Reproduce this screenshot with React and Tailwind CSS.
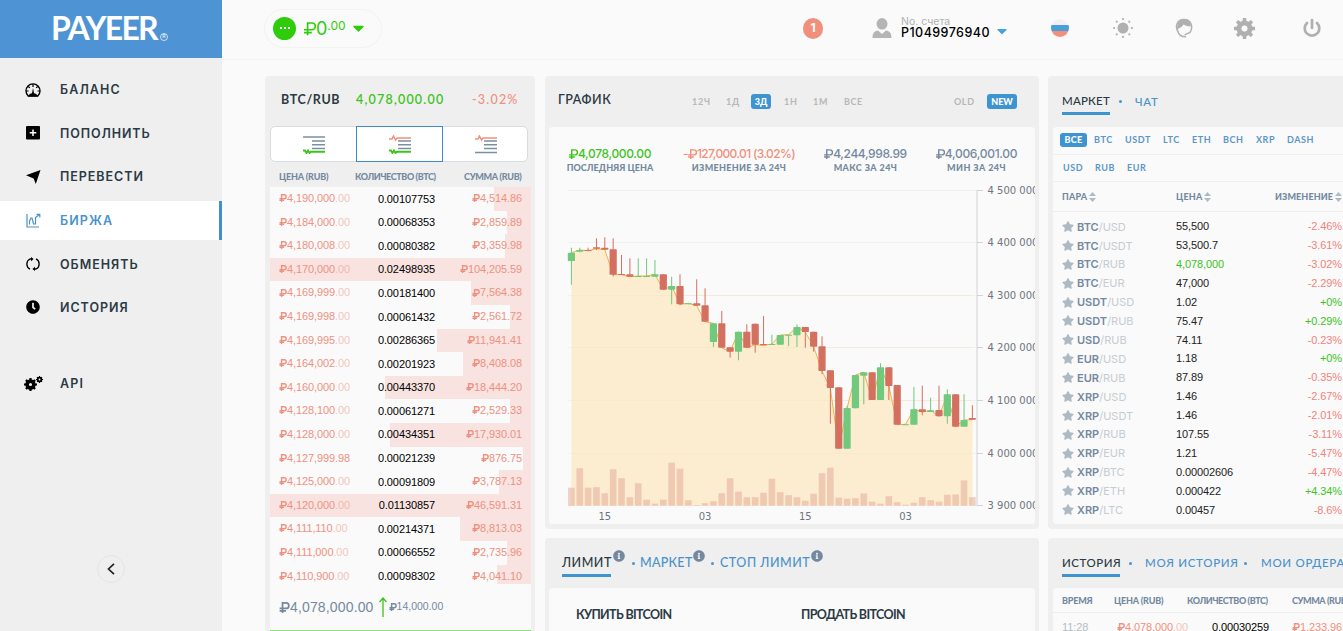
import React from 'react';
import { FaCaretDown, FaInfoCircle, FaStar, FaClock } from 'react-icons/fa';

const orders = [
  ['4,190,000', '.00', '0.00107753', '4,514.86', 37],
  ['4,184,000', '.00', '0.00068353', '2,859.89', 24],
  ['4,180,008', '.00', '0.00080382', '3,359.98', 26],
  ['4,170,000', '.00', '0.02498935', '104,205.59', 261],
  ['4,169,999', '.00', '0.00181400', '7,564.38', 60],
  ['4,169,998', '.00', '0.00061432', '2,561.72', 21],
  ['4,169,995', '.00', '0.00286365', '11,941.41', 94],
  ['4,164,002', '.00', '0.00201923', '8,408.08', 68],
  ['4,160,000', '.00', '0.00443370', '18,444.20', 146],
  ['4,128,100', '.00', '0.00061271', '2,529.33', 21],
  ['4,128,000', '.00', '0.00434351', '17,930.01', 141],
  ['4,127,999.98', '', '0.00021239', '876.75', 8],
  ['4,125,000', '.00', '0.00091809', '3,787.13', 32],
  ['4,120,000', '.00', '0.01130857', '46,591.31', 261],
  ['4,111,110', '.00', '0.00214371', '8,813.03', 71],
  ['4,111,000', '.00', '0.00066552', '2,735.96', 24],
  ['4,110,900', '.00', '0.00098302', '4,041.10', 34],
];

const pairs = [
  ['BTC', 'USD', '55,500', '-2.46%'],
  ['BTC', 'USDT', '53,500.7', '-3.61%'],
  ['BTC', 'RUB', '4,078,000', '-3.02%'],
  ['BTC', 'EUR', '47,000', '-2.29%'],
  ['USDT', 'USD', '1.02', '+0%'],
  ['USDT', 'RUB', '75.47', '+0.29%'],
  ['USD', 'RUB', '74.11', '-0.23%'],
  ['EUR', 'USD', '1.18', '+0%'],
  ['EUR', 'RUB', '87.89', '-0.35%'],
  ['XRP', 'USD', '1.46', '-2.67%'],
  ['XRP', 'USDT', '1.46', '-2.01%'],
  ['XRP', 'RUB', '107.55', '-3.11%'],
  ['XRP', 'EUR', '1.21', '-5.47%'],
  ['XRP', 'BTC', '0.00002606', '-4.47%'],
  ['XRP', 'ETH', '0.000422', '+4.34%'],
  ['XRP', 'LTC', '0.00457', '-8.6%'],
];

// up, body top, body bottom, high, low, volume height
const candles = [
  [1, 72.7, 81, 67.7, 104.7, 18], [1, 70, 71.7, 67.7, 72.3, 37.5], [0, 70, 70.7, 67.7, 70.7, 18], [0, 67.3, 68.7, 58.3, 70, 18.5],
  [0, 67.7, 69.7, 57.3, 70, 12.5], [0, 69.3, 94.7, 58.3, 96.5, 36.5], [0, 94, 94.7, 75, 94.7, 27.5], [0, 94.3, 96.7, 78.3, 96.7, 8.5],
  [1, 96, 96.7, 78.3, 96.7, 22.5], [1, 96, 96.7, 78.3, 96.7, 6], [1, 94.3, 96.7, 80, 96.7, 2], [0, 94.3, 109.7, 94.3, 109.7, 6],
  [1, 106, 109.7, 96.7, 124.3, 43], [0, 106, 124.3, 94.3, 125.3, 37], [1, 123.3, 124.3, 123.3, 124.3, 5.5], [0, 123.3, 125.7, 99.3, 125.7, 0.7],
  [0, 125.3, 141.7, 108.3, 141.7, 2.5], [1, 143.3, 162, 143.3, 167, 4.5], [0, 143.3, 167.7, 131, 167.7, 12.5], [0, 167.3, 171.7, 167.3, 177.7, 27.5],
  [1, 151.7, 171.7, 151.7, 180.3, 14], [0, 151.7, 167.7, 144.3, 167.7, 8.5], [0, 143.7, 164.7, 143.7, 172.7, 8.5], [0, 164, 165.3, 136, 165.3, 13],
  [1, 164, 164.7, 154.7, 164.7, 27], [1, 155, 164.7, 155, 164.7, 13.5], [1, 154.7, 155.3, 154.7, 166, 10.5], [1, 147, 155.3, 144.3, 167, 8.5],
  [0, 147, 152, 147, 167.7, 5], [0, 151.7, 166.7, 151.7, 171.7, 12], [0, 166.3, 191, 156.3, 194, 32.5], [0, 190.3, 208, 190.3, 243.7, 38],
  [0, 207.3, 268.7, 207.3, 268.7, 8], [1, 228, 268.7, 226.3, 268.7, 7], [1, 195, 228.3, 195, 228.3, 7.5], [1, 192.3, 195.7, 192.3, 224.3, 12.3],
  [0, 192.3, 220, 192.3, 220, 4], [1, 187.3, 220, 183.3, 220, 2], [0, 187.3, 206, 187.3, 220, 9.5], [0, 205, 244.7, 205, 244.7, 3.5],
  [1, 244.3, 245, 244.3, 245, 1], [1, 229.3, 244.7, 207, 244.7, 3], [0, 229.3, 232, 205.7, 235.3, 8.5], [1, 230.3, 232, 217.7, 232, 5.5],
  [0, 230, 236.3, 205.7, 236.3, 4], [1, 214.3, 236.3, 209.3, 243.7, 11], [0, 214.3, 246.7, 214.3, 246.7, 11.3], [1, 240, 246.7, 214.3, 246.7, 25.3],
  [0, 238, 239.7, 225.3, 239.7, 8.5],
];

const candleX = (i) => 22.4 + i * 8.354;

const Ruble = ({ className = '', stroke = 1.6 }) => (
  <svg viewBox="0 0 8 9" className={`inline-block ${className}`} fill="none" stroke="currentColor" strokeWidth={stroke}>
    <path d="M2.4 9V.8h2.900a2.200 2.200 0 0 1 0 4.500H0M0 7.200h5.200" />
  </svg>
);

const Gear = ({ className, fill, hole }) => (
  <svg viewBox="0 0 20 20" className={className} fill={fill}>
    <circle cx="10" cy="10" r="5.200" fill="none" stroke={fill} strokeWidth={hole} />
    {[0, 45, 90, 135, 180, 225, 270, 315].map((deg) => (
      <path key={deg} d="M8 4.500 8.400 0h3.200L12 4.500Z" transform={`rotate(${deg} 10 10)`} />
    ))}
  </svg>
);

const GaugeIcon = () => (
  <svg viewBox="0 0 16 14" className="h-3.5 w-4">
    <path d="M3.2 13A7 7 0 1 1 12.8 13Z" fill="none" stroke="#000" strokeWidth="1.4" strokeLinejoin="round" />
    <path d="M8 1v3M1 8h2.5M15 8h-2.5M3.3 3.5l1.5 1.4M12.7 3.5l-1.5 1.4" stroke="#000" strokeWidth="1.2" />
    <path d="M3 13.5c.4-2 2.300-3 4-3.200L8 5l1 5.300c1.700.2 3.600 1.200 4 3.200Z" />
  </svg>
);

const PlusIcon = () => (
  <svg viewBox="0 0 14 14" className="h-3.5 w-3.5">
    <rect width="14" height="13.500" rx="1" />
    <path d="M7 3.500v6.500M3.700 6.800h6.600" stroke="#fff" strokeWidth="1.500" />
  </svg>
);

const SendIcon = () => (
  <svg viewBox="0 0 15 14" className="h-3.5 w-[15px]">
    <path d="M14.500 0 9.800 14 7.600 8.400 0 5.300Z" />
  </svg>
);

const GraphIcon = () => (
  <svg viewBox="0 0 15 15" className="h-[15px] w-[15px]" fill="none" stroke="#4a92cb" strokeWidth="1.200">
    <path d="M1 1v13h12M3.500 11.500V8L5 5h1l1.500 6h2V4.500l4-3M10.500 1.300h3.300V4.500" />
  </svg>
);

const SwapIcon = () => (
  <svg viewBox="0 0 16 14" className="h-3.5 w-4" fill="none" stroke="#000" strokeWidth="1.300">
    <path d="M5 12.200A5.700 5.700 0 0 1 5 2H6.500M11 1.800A5.700 5.700 0 0 1 11 12H9.500" />
    <path d="M6 0l2.600 2L6 4.200ZM10 9.800 7.400 12 10 14Z" fill="#000" stroke="none" />
  </svg>
);

const ApiIcon = () => (
  <span className="flex items-start">
    <Gear className="mt-0.5 h-[13px] w-[13px]" fill="#000" hole={5.5} />
    <Gear className="-ml-px h-[7px] w-[7px]" fill="#000" hole={5} />
  </span>
);

const menu = [
  { label: 'БАЛАНС', icon: <GaugeIcon />, track: 'tracking-[1.1px]' },
  { label: 'ПОПОЛНИТЬ', icon: <PlusIcon />, track: 'tracking-[0.9px]' },
  { label: 'ПЕРЕВЕСТИ', icon: <SendIcon />, track: 'tracking-[0.95px]' },
  { label: 'БИРЖА', icon: <GraphIcon />, active: true, track: 'tracking-[1.1px]' },
  { label: 'ОБМЕНЯТЬ', icon: <SwapIcon />, track: 'tracking-[1px]' },
  { label: 'ИСТОРИЯ', icon: <FaClock className="h-3.5 w-3.5 text-black" />, track: 'tracking-[0.95px]' },
];

const MenuItem = ({ item }) => (
  <div
    className={`flex h-[39px] items-center ${
      item.active ? 'border-r-[3px] border-[#4090cf] bg-white text-[#4a92cb]' : 'text-[#2b3a44]'
    }`}
  >
    <span className="ml-[23px] flex w-5 justify-center">{item.icon}</span>
    <span className={`ml-[17px] pt-0.5 text-[12.5px] font-semibold ${item.track}`}>{item.label}</span>
  </div>
);

const Sidebar = () => (
  <aside className="flex w-[222px] shrink-0 flex-col bg-[#efefef] font-['Inter',sans-serif]">
    <div className="flex h-[58px] items-center justify-center bg-[#4e94d4] text-white">
      <span className="mb-0.5 ml-[-3px] font-['Lato',sans-serif] text-[32px] font-bold tracking-[-1.7px]">PAYEER</span>
      <span className="ml-[3px] mt-4 flex h-2 w-2 items-center justify-center rounded-full border border-white/70 text-[5px]">R</span>
    </div>
    <nav className="mt-3 flex flex-col gap-[4.6px]">
      {menu.map((item) => (
        <MenuItem key={item.label} item={item} />
      ))}
    </nav>
    <div className="mt-[37px]">
      <MenuItem item={{ label: 'API', icon: <ApiIcon />, track: 'tracking-[1.2px]' }} />
    </div>
    <button className="ml-[97px] mt-[152px] flex h-7 w-7 items-center justify-center rounded-full border border-[#e4e4e4]">
      <svg viewBox="0 0 8 12" className="h-3 w-2" fill="none" stroke="#222" strokeWidth="1.700">
        <path d="M7 .8 1.500 6 7 11.200" />
      </svg>
    </button>
  </aside>
);

const Header = () => (
  <header className="flex h-[60px] shrink-0 items-center border-b border-[#f4f4f4] pb-[3px] font-['Inter',sans-serif] text-[#b0b0b0]">
    <div className="ml-[42px] flex h-[39px] w-[118px] items-center rounded-full border border-[#f1f3ef] text-[#2ecc0a]">
      <span className="ml-2 flex h-[23px] w-[23px] items-center justify-center gap-0.5 rounded-full bg-[#2ecc0a]">
        <i className="h-0.5 w-0.5 bg-white" />
        <i className="h-0.5 w-0.5 bg-white" />
        <i className="h-0.5 w-0.5 bg-white" />
      </span>
      <Ruble className="ml-2 h-[15px] w-[12px]" stroke={1.1} />
      <span className="mt-0.5 text-[18px] leading-none">0</span>
      <span className="mb-1 text-[12px]">.00</span>
      <FaCaretDown className="ml-1.5 h-[18px] w-[13px]" />
    </div>
    <span className="ml-[421px] flex h-[21px] w-[20px] items-center justify-center rounded-full bg-[#f0907c] text-[12px] font-bold text-white">
      1
    </span>
    <svg viewBox="0 0 20 20" className="ml-[49px] h-5 w-5" fill="#b5b5b5">
      <ellipse cx="10" cy="5.800" rx="5.500" ry="5.800" />
      <path d="M.5 20c0-5 2-7 5.500-7.500l4 3.500 4-3.500c3.500.5 5.500 2.500 5.500 7.500Z" />
    </svg>
    <div className="ml-[9px] w-[92px]">
      <div className="text-[10.5px] leading-[10px]">No. счета</div>
      <div className="text-[12.5px] font-medium leading-[12px] tracking-[0.45px] text-black">P1049976940</div>
    </div>
    <FaCaretDown className="ml-[3px] mt-1.5 h-4 w-3 text-[#45a0dc]" />
    <svg viewBox="0 0 18 18" className="ml-[43px] h-[18px] w-[18px]">
      <clipPath id="flag">
        <circle cx="9" cy="9" r="9" />
      </clipPath>
      <g clipPath="url(#flag)">
        <path d="M0 0h18v6H0z" fill="#f3eff2" />
        <path d="M0 6h18v6H0z" fill="#4b9fd8" />
        <path d="M0 12h18v6H0z" fill="#f0907c" />
      </g>
    </svg>
    <svg viewBox="0 0 20 20" className="ml-[44px] h-5 w-5" fill="#b0b0b0">
      <circle cx="10" cy="10" r="5.500" />
      {[0, 45, 90, 135, 180, 225, 270, 315].map((deg) => (
        <circle key={deg} cx="10" cy="1.100" r="1.100" transform={`rotate(${deg} 10 10)`} />
      ))}
    </svg>
    <svg viewBox="0 0 18 20" className="ml-[42px] h-5 w-[18px]" fill="none" stroke="#b0b0b0" strokeWidth="1.400">
      <path d="M3.500 14.500C-.5 9 1.500 1.500 9 1.500S18.500 9 15 14.500L9.500 16.800M2.500 12.500C3.500 16.500 6.500 19 11 18.800" />
      <path d="M2.200 11.500C5 10 7.500 8.500 8.500 6.500c2 1 4.500 2 7.500 2C15.500 3.500 12.500 1 9 1S1.500 4 2.200 11.500Z" fill="#b0b0b0" stroke="none" />
    </svg>
    <Gear className="ml-[41px] h-[21px] w-[21px]" fill="#b0b0b0" hole={4.6} />
    <svg viewBox="0 0 18 20" className="ml-[48px] h-5 w-[18px]" fill="none" stroke="#b0b0b0" strokeWidth="2.700" strokeLinecap="round">
      <path d="M4 5A7.300 7.300 0 1 0 14 5" />
      <path d="M9 2v8" />
    </svg>
  </header>
);

const BookIcon = ({ sell, buy }) => (
  <svg viewBox="0 0 22 19" className="ml-0.5 h-[19px] w-[22px]" fill="none" stroke="#7b8f9f" strokeWidth="1.500">
    {sell ? <path d="M0 4h3l1.500-3 2 4L8 3h14" stroke="#f0907c" /> : <path d="M0 2h22" />}
    <path d="M9 6h13M9 9.800h13M9 13.500h13" />
    {buy ? <path d="M0 15.500h2l1.500 2.500 1.500-2.500 1.500 2.500 1.500-1.200h14" stroke="#3cc41c" strokeWidth="1.900" /> : <path d="M0 17.500h22" />}
  </svg>
);

const OrderBook = () => (
  <section className="flex h-[600px] w-[270px] shrink-0 flex-col rounded-t bg-[#efefef]">
    <div className="flex h-[50px] items-center pb-0.5 pl-4 font-['Lato',sans-serif] text-[12.5px]">
      <span className="w-[75px] font-bold tracking-[0.6px] text-[#2b3a44]">BTC/RUB</span>
      <span className="w-[116px] font-semibold tracking-[1.2px] text-[#3cc41c]">4,078,000.00</span>
      <span className="font-medium tracking-[1.2px] text-[#f0907c]">-3.02%</span>
    </div>
    <div className="mx-[5px] flex h-9 w-[258px] rounded-[5px] border border-[#d6dde2] bg-white">
      <div className="flex flex-1 items-center justify-center"><BookIcon buy /></div>
      <div className="-my-px flex w-[87px] items-center justify-center border border-[#3f8cc4]"><BookIcon sell buy /></div>
      <div className="flex flex-1 items-center justify-center"><BookIcon sell /></div>
    </div>
    <div className="flex h-[25px] items-center whitespace-nowrap pl-3.5 pt-1 font-['Lato',sans-serif] text-[9px] font-black tracking-[-0.4px] text-[#7489a0]">
      <span className="w-[76px] tracking-[-0.2px]">ЦЕНА (RUB)</span>
      <span className="w-[109px]">КОЛИЧЕСТВО (BTC)</span>
      <span className="tracking-[-0.3px]">СУММА (RUB)</span>
    </div>
    <div className="mx-[5px] mr-1 flex-1 bg-[#fafafa]">
      <div className="h-[397px] overflow-hidden">
        {orders.map(([price, cents, amount, total, width]) => (
          <div key={price} className="relative flex h-[23.6px] items-center font-['Liberation_Sans',sans-serif] text-[11px] tracking-[-0.1px]">
            <div className="absolute inset-y-0 right-0 bg-[#f8e3e0]" style={{ width }} />
            <span className="relative mb-px ml-[9px] w-[76px] text-[#ef9181]">
              <Ruble className="mb-0.5 h-2 w-2" />
              {price}
              <span className="opacity-50">{cents}</span>
            </span>
            <span className="relative w-20 text-right text-black">{amount}</span>
            <span className="relative mb-px ml-auto mr-[9px] text-[#ef9181]">
              <Ruble className="mb-0.5 h-2 w-2" />
              {total}
            </span>
          </div>
        ))}
      </div>
      <div className="flex h-[47px] items-center border-b border-[#8be07c] pl-[9px] font-['Liberation_Sans',sans-serif] text-[#7489a0]">
        <Ruble className="h-[11px] w-[11px]" stroke={1.4} />
        <span className="text-[14px] tracking-[0.15px]">4,078,000.00</span>
        <svg viewBox="0 0 8 20" className="ml-[5px] h-5 w-2" fill="none" stroke="#3cc41c" strokeWidth="1.300">
          <path d="M4 20V1M.5 5 4 1l3.500 4" />
        </svg>
        <Ruble className="ml-0.5 h-2 w-2" />
        <span className="text-[10.5px]">14,000.00</span>
      </div>
    </div>
  </section>
);

const gridLines = [
  [10.5, '4 500 000'],
  [62.5, '4 400 000'],
  [115.5, '4 300 000'],
  [167.5, '4 200 000'],
  [220.5, '4 100 000'],
  [273.5, '4 000 000'],
  [325.5, '3 900 000'],
];

const Chart = () => {
  const closes = candles.map((c, i) => `${candleX(i)},${c[0] ? c[1] : c[2]}`);
  return (
    <svg viewBox="0 0 486 344" className="block h-[344px] w-[486px]">
      {gridLines.map(([y, label]) => (
        <g key={y}>
          <path d={`M19 ${y}H428`} stroke="#f1f1f1" />
          <path d={`M428 ${y}h6`} stroke="#d3d3d3" />
          <text x="438.500" y={y + 3.5} fontSize="10" fontFamily="DejaVu Sans" fill="#6f7480">
            {label}
          </text>
        </g>
      ))}
      <polygon points={`${candleX(0)},325.7 ${closes.join(' ')} ${candleX(48)},325.7`} fill="#fdebcb" fillOpacity="0.9" />
      {[115.5, 167.5, 220.5, 273.5].map((y) => (
        <path key={y} d={`M23 ${y}H423`} stroke="#f5e4c6" strokeOpacity="0.5" />
      ))}
      <polyline points={closes.join(' ')} fill="none" stroke="#f5b041" strokeWidth="1" />
      {candles.map(([up, top, bottom, high, low, volume], i) => (
        <g key={i} fill={up ? '#70c97c' : '#d3705f'}>
          <rect x={candleX(i) - 3.3} y={325.7 - volume} width="6.600" height={volume} fill="#e3a593" fillOpacity="0.5" />
          <rect x={candleX(i) - 0.5} y={high} width="1" height={low - high} />
          <rect x={candleX(i) - 3.6} y={top} width="7.200" height={Math.max(bottom - top, 1)} rx="0.800" />
        </g>
      ))}
      <path d="M428 10v316" stroke="#d3d3d3" />
      {[[4, '15'], [16, '03'], [28, '15'], [40, '03']].map(([i, label]) => (
        <text key={i} x={candleX(i)} y="340" fontSize="10" fontFamily="DejaVu Sans" textAnchor="middle" fill="#6f7480">
          {label}
        </text>
      ))}
    </svg>
  );
};

const stats = [
  ['4,078,000.00', 'ПОСЛЕДНЯЯ ЦЕНА', 'text-[#3cc41c] tracking-[-0.35px]', 'w-[122px]', 'tracking-[0px]'],
  ['127,000.01 (3.02%)', 'ИЗМЕНЕНИЕ ЗА 24Ч', 'text-[#f0907c] tracking-[-0.65px]', 'w-[136px]', 'tracking-[0.3px]'],
  ['4,244,998.99', 'МАКС ЗА 24Ч', 'text-[#7489a0] tracking-[-0.4px]', 'w-[117px]', 'tracking-[0.4px]'],
  ['4,006,001.00', 'МИН ЗА 24Ч', 'text-[#7489a0] tracking-[-0.3px]', 'w-[105px]', 'tracking-[0.4px]'],
];

const ChartPanel = () => (
  <section className="h-[453px] shrink-0 rounded bg-[#efefef] px-1">
    <div className="flex h-[51px] items-center font-['Lato',sans-serif] text-[9px] font-bold text-[#b7b7b7]">
      <span className="mb-0.5 ml-[9px] w-[134px] text-[12.5px] font-semibold tracking-[0.55px] text-[#2b3a44]">ГРАФИК</span>
      <span className="w-[34px] tracking-[0.8px]">12Ч</span>
      <span className="w-[25px] tracking-[0.8px]">1Д</span>
      <span className="flex h-[15px] w-5 items-center justify-center rounded-[3px] bg-[#3d94d1] font-black text-white">3Д</span>
      <span className="ml-[13px] w-[29px] tracking-[0.8px]">1Н</span>
      <span className="w-[31px] tracking-[0.8px]">1М</span>
      <span className="w-[110px] tracking-[0.6px]">ВСЕ</span>
      <span className="w-[33px] tracking-[0.6px]">OLD</span>
      <span className="flex h-[15px] w-[30px] items-center justify-center rounded-[3px] bg-[#3d94d1] font-black text-white">NEW</span>
    </div>
    <div className="h-[397px] rounded bg-[#fafafa]">
      <div className="flex h-[53px] pt-5">
        {stats.map(([value, label, color, width, track]) => (
          <div key={label} className={`${width} flex flex-col items-center whitespace-nowrap`}>
            <div className={`flex h-[14px] items-center font-['Inter',sans-serif] text-[12px] font-medium ${color}`}>
              {label.startsWith('ИЗМ') && '-'}
              <Ruble className="mb-px h-2.5 w-[9px]" stroke={1.3} />
              {value}
            </div>
            <div className={`font-['Lato',sans-serif] text-[9px] font-black leading-[14px] text-[#7489a0] ${track}`}>{label}</div>
          </div>
        ))}
      </div>
      <Chart />
    </div>
  </section>
);

const Dot = ({ className }) => <i className={`h-[3px] w-[3px] shrink-0 rounded-full bg-[#4a92cb] ${className}`} />;

const TradePanel = () => (
  <section className="h-[120px] shrink-0 rounded-t bg-[#efefef] px-1 font-['Lato',sans-serif]">
    <div className="flex h-[50px] items-center whitespace-nowrap pl-[13px] text-[12.5px] font-medium text-[#4a92cb]">
      <span className="mt-[5px] w-[49px] border-b-[3px] border-[#3d94d1] pb-[3px] leading-[17px] tracking-[0.5px] text-[#2b3a44]">ЛИМИТ</span>
      <FaInfoCircle className="mb-3.5 ml-0.5 h-3 w-3 text-[#7489a0]" />
      <Dot className="ml-[7px] mr-[5px]" />
      <span className="w-[52px] tracking-[0.3px]">МАРКЕТ</span>
      <FaInfoCircle className="mb-3.5 ml-px h-3 w-3 text-[#7489a0]" />
      <Dot className="ml-[6px] mr-[6px]" />
      <span className="w-[90px] tracking-[0.5px]">СТОП ЛИМИТ</span>
      <FaInfoCircle className="mb-3.5 ml-px h-3 w-3 text-[#7489a0]" />
    </div>
    <div className="flex h-[70px] rounded-t bg-[#fafafa] pl-[27px] pt-[17px] text-[12.5px] font-bold leading-5 tracking-[-0.65px] text-[#2b3a44]">
      <span className="w-[225px]">КУПИТЬ BITCOIN</span>
      <span>ПРОДАТЬ BITCOIN</span>
    </div>
  </section>
);

const SortIcon = () => (
  <svg viewBox="0 0 7 10" className="h-2.5 w-[7px]" fill="#adbac4">
    <path d="M0 4 3.500 0 7 4ZM0 6l3.500 4L7 6Z" />
  </svg>
);

const coins = [
  ['BTC', 'w-[31px]'],
  ['USDT', 'w-[38px]'],
  ['LTC', 'w-[29px]'],
  ['ETH', 'w-[31px]'],
  ['BCH', 'w-[33px]'],
  ['XRP', 'w-[31px]'],
  ['DASH', 'w-[40px]'],
];

const MarketPanel = () => (
  <section className="h-[453px] w-[320px] shrink-0 rounded bg-[#efefef] pl-[5px] font-['Lato',sans-serif]">
    <div className="flex h-[51px] items-center pl-[9px] text-[11.5px] font-medium text-[#4a92cb]">
      <span className="mt-[3px] w-[48px] border-b-[3px] border-[#3d94d1] pb-[3px] leading-[17px] tracking-[0.2px] text-[#2b3a44]">МАРКЕТ</span>
      <Dot className="ml-[9px] mr-[13px]" />
      <span className="tracking-[0.7px]">ЧАТ</span>
    </div>
    <div className="h-[397px] overflow-hidden rounded-l bg-[#fafafa]">
      <div className="flex h-7 items-center border-b border-[#efefef] pb-px pl-[7px] text-[9px] font-bold tracking-[0.55px] text-[#5b96c8]">
        <span className="mr-[7px] flex h-3.5 w-[27px] items-center justify-center rounded-[3px] bg-[#3d94d1] font-black tracking-[0.3px] text-white">ВСЕ</span>
        {coins.map(([coin, width]) => (
          <span key={coin} className={width}>{coin}</span>
        ))}
      </div>
      <div className="flex h-[27px] items-center border-b border-[#efefef] pl-2.5 text-[9px] font-bold tracking-[0.6px] text-[#5b96c8]">
        <span className="w-8">USD</span>
        <span className="w-8">RUB</span>
        <span>EUR</span>
      </div>
      <div className="flex h-[30px] items-center border-b border-[#efefef] pl-[9px] text-[9px] font-black tracking-[0.2px] text-[#7489a0]">
        <span className="flex w-[114px] items-center gap-0.5">ПАРА<SortIcon /></span>
        <span className="flex w-[99px] items-center gap-0.5">ЦЕНА<SortIcon /></span>
        <span className="flex items-center gap-0.5 tracking-[0.1px]">ИЗМЕНЕНИЕ<SortIcon /></span>
      </div>
      <div className="pt-[5px]">
        {pairs.map(([base, quote, price, change], i) => (
          <div key={base + quote} className="flex h-[18.9px] items-center pl-[9px]">
            <FaStar className="mr-[3px] h-[11px] w-3 text-[#adbac4]" />
            <span className="w-[99px] pt-px font-['Inter',sans-serif] text-[11px] text-[#c6ccd1]">
              <b className="font-semibold text-[#7489a0]">{base}</b>/{quote}
            </span>
            <span className={`w-[100px] font-['Liberation_Sans',sans-serif] text-[11px] tracking-[-0.1px] ${i === 2 ? 'text-[#3cc41c]' : 'text-[#222]'}`}>
              {price}
            </span>
            <span
              className={`w-[66px] text-right font-['Liberation_Sans',sans-serif] text-[11px] tracking-[-0.1px] ${
                change.startsWith('+') ? 'text-[#3cc41c]' : 'text-[#f0847a]'
              }`}
            >
              {change}
            </span>
          </div>
        ))}
      </div>
    </div>
  </section>
);

const HistoryPanel = () => (
  <section className="h-[120px] w-[400px] shrink-0 rounded-t bg-[#efefef] pl-[5px] font-['Lato',sans-serif]">
    <div className="flex h-[50px] items-center whitespace-nowrap pl-[9px] text-[11.5px] font-medium tracking-[0.7px] text-[#4a92cb]">
      <span className="mt-[5px] w-[58px] border-b-[3px] border-[#3d94d1] pb-[3px] leading-[17px] tracking-[0.5px] text-[#2b3a44]">ИСТОРИЯ</span>
      <Dot className="ml-[9px] mr-[13px]" />
      <span className="w-[99px]">МОЯ ИСТОРИЯ</span>
      <Dot className="mr-[14px]" />
      <span>МОИ ОРДЕРА</span>
    </div>
    <div className="h-[70px] rounded-tl bg-[#fafafa]">
      <div className="flex h-[25px] items-center whitespace-nowrap border-b border-[#efefef] pl-[9px] pt-0.5 text-[9px] font-black tracking-[-0.4px] text-[#7489a0]">
        <span className="w-[52px] tracking-[-0.2px]">ВРЕМЯ</span>
        <span className="w-[73px] tracking-[-0.2px]">ЦЕНА (RUB)</span>
        <span className="w-[105px]">КОЛИЧЕСТВО (BTC)</span>
        <span>СУММА (RUB)</span>
      </div>
      <div className="flex h-[29px] items-center whitespace-nowrap pl-[9px] font-['Liberation_Sans',sans-serif] text-[11px] tracking-[-0.1px] text-[#ef9181]">
        <span className="w-[55px] text-[#b5bcc2]">11:28</span>
        <span className="w-[95px]">
          <Ruble className="mb-0.5 h-2 w-2" />4,078,000<span className="opacity-50">.00</span>
        </span>
        <span className="w-[80px] text-black">0.00030259</span>
        <span><Ruble className="mb-0.5 h-2 w-2" />1,233.96</span>
      </div>
    </div>
  </section>
);

const App = () => (
  <div className="flex h-[631px] w-[1343px] overflow-hidden bg-[#fafafa]">
    <Sidebar />
    <div className="flex min-w-0 flex-1 flex-col overflow-hidden">
      <Header />
      <main className="flex min-h-0 flex-1 overflow-hidden pl-[43px] pt-4">
        <OrderBook />
        <div className="ml-[10px] flex w-[494px] shrink-0 flex-col gap-[9px]">
          <ChartPanel />
          <TradePanel />
        </div>
        <div className="ml-[9px] flex shrink-0 flex-col gap-[9px]">
          <MarketPanel />
          <HistoryPanel />
        </div>
      </main>
    </div>
  </div>
);

export default App;
